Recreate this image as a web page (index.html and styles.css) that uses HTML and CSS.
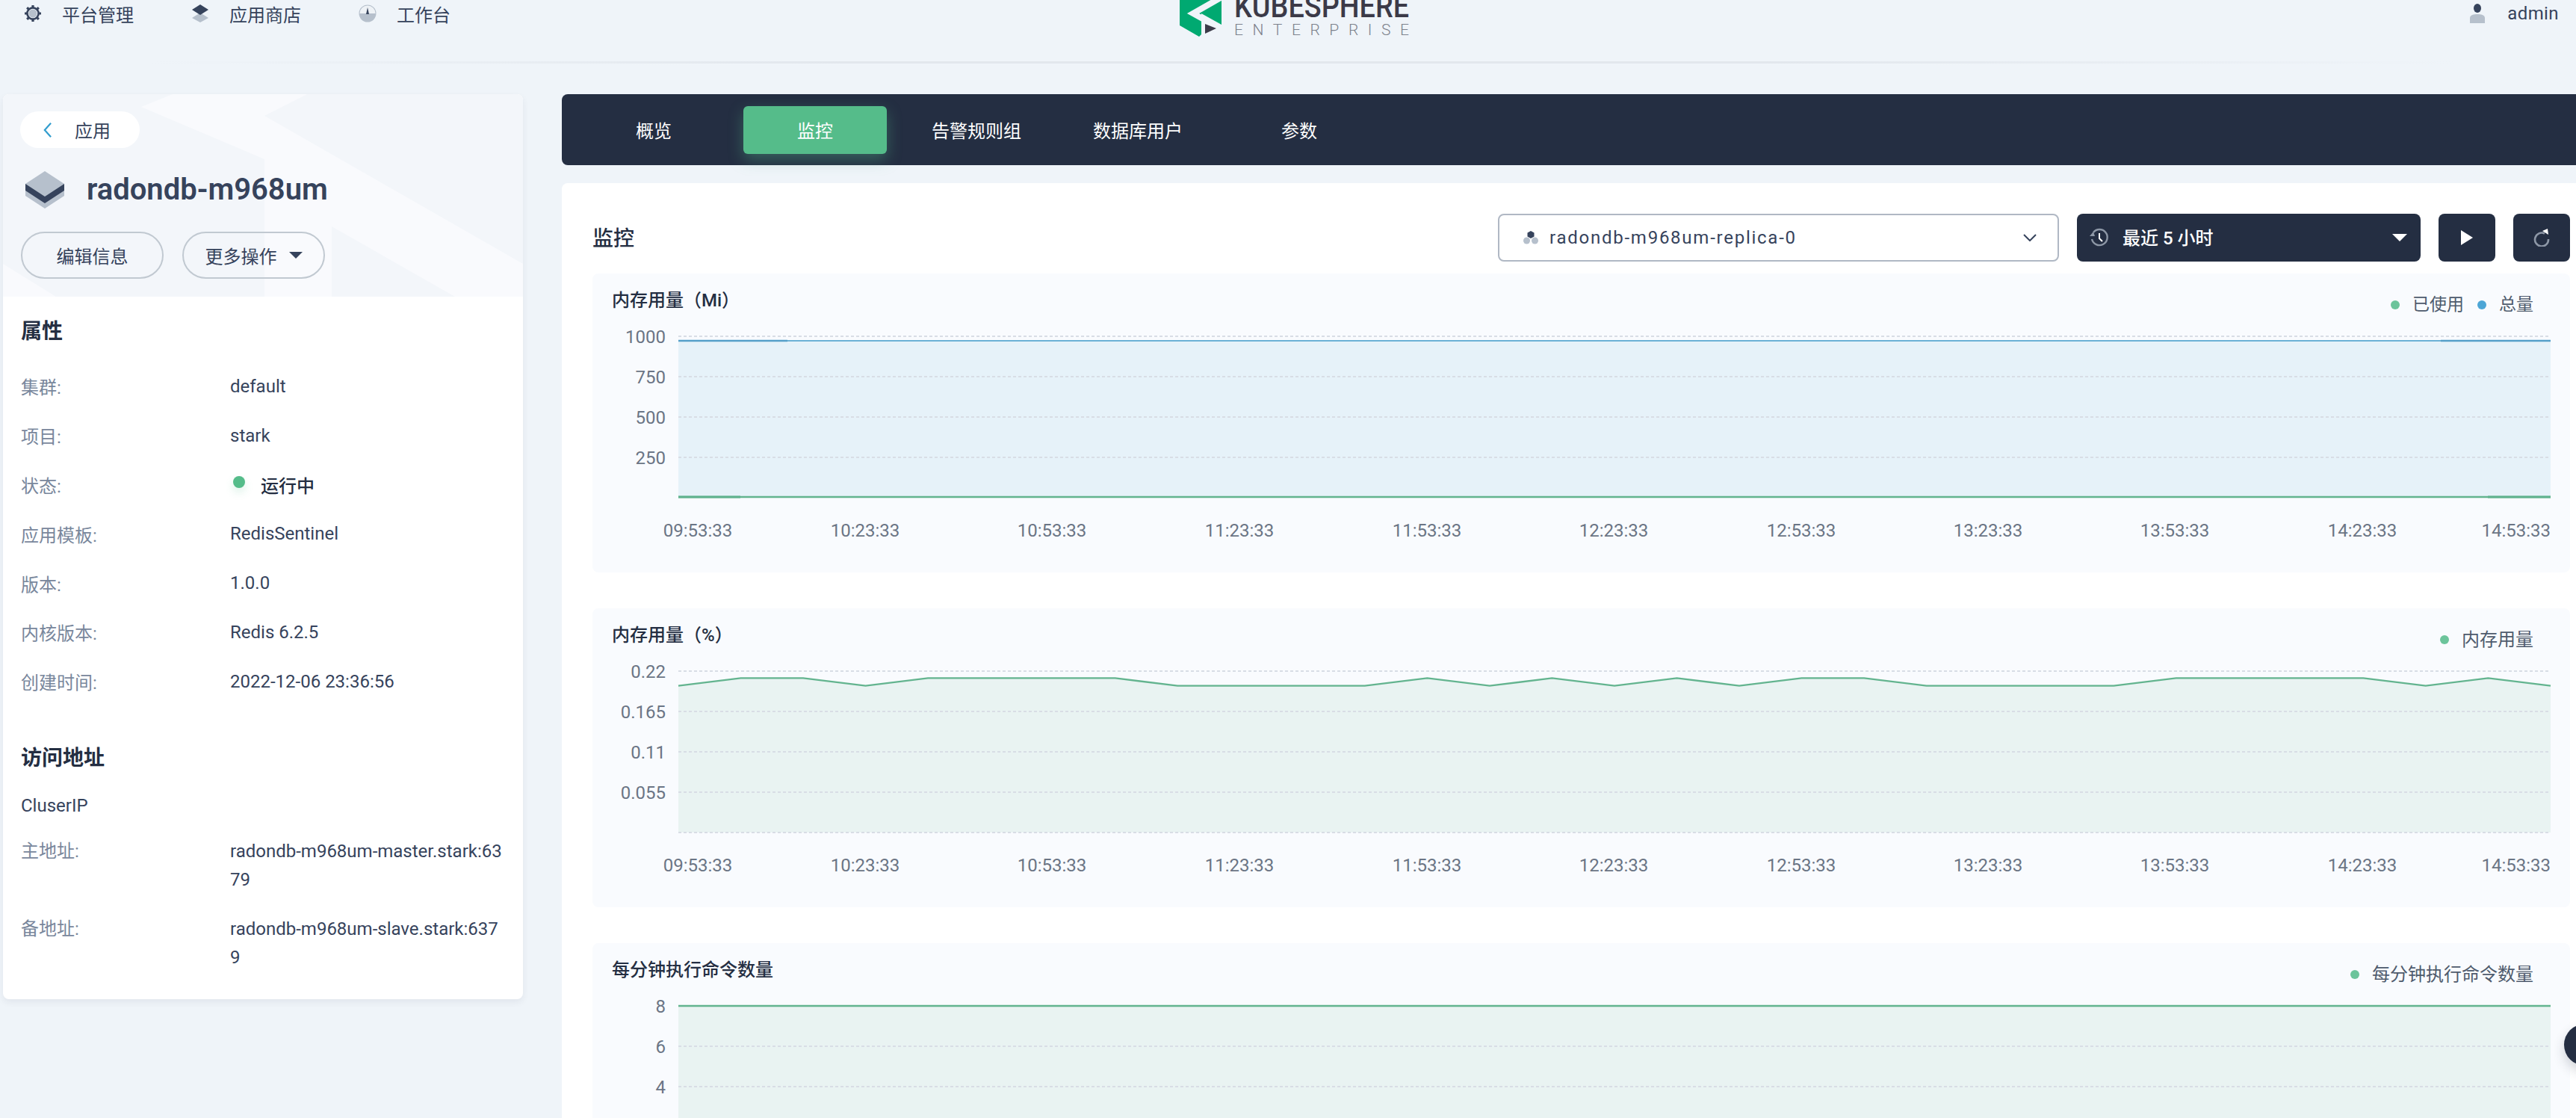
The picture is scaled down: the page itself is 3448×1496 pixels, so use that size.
FILE: index.html

```html
<!DOCTYPE html>
<html lang="zh">
<head>
  <meta charset="UTF-8" />
  <title>radondb-m968um - KubeSphere</title>
  <link rel="stylesheet" href="styles.css">
</head>
<body>

  <header class="topbar">
    <nav class="topnav">
      <a class="topnav-item">
        <svg class="nav-icon" viewBox="0 0 24 24">
          <circle cx="12" cy="12" r="5.5" fill="#b6c0cc"/>
          <circle cx="12" cy="12" r="7.6" fill="none" stroke="#36435c" stroke-width="2.6"/>
          <path d="M12 1v4M12 19v4M1 12h4M19 12h4M4.2 4.2l2.9 2.9M16.9 16.9l2.9 2.9M4.2 19.8l2.9-2.9M16.9 7.1l2.9-2.9" stroke="#36435c" stroke-width="3.2"/>
        </svg>
        平台管理
      </a>
      <a class="topnav-item">
        <svg class="nav-icon" viewBox="0 0 24 24">
          <path d="M12 11 L23 18 L12 24 L1 18 Z" fill="#b6c0cc"/>
          <path d="M12 0 L23 7 L12 14 L1 7 Z" fill="#36435c"/>
        </svg>
        应用商店
      </a>
      <a class="topnav-item">
        <svg class="nav-icon" viewBox="0 0 24 24">
          <circle cx="12" cy="12" r="11.5" fill="#b6c0cc"/>
          <path d="M1.5 12a10.5 10.5 0 0 1 21 0z" fill="#eef2f6"/>
          <path d="M12 4 L14 13 H10 Z" fill="#36435c"/>
        </svg>
        工作台
      </a>
    </nav>
    <svg class="logo" viewBox="0 0 310 50">
      <polygon points="0,-2 56,-2 56,33 29,18 29,46 26,49 0,34" fill="#00a971"/>
      <polyline points="60,-6 18,18 56,39" fill="none" stroke="#eff4f9" stroke-width="8"/>
      <polygon points="34,32 34,45 49,38" fill="#3b3a48"/>
      <text class="logo-main" x="73" y="23" textLength="234" lengthAdjust="spacingAndGlyphs">KUBESPHERE</text>
      <text class="logo-sub" x="73" y="47" textLength="234">ENTERPRISE</text>
    </svg>
    <div class="user">
      <svg class="user-icon" viewBox="0 0 22 26">
        <ellipse cx="11" cy="6" rx="5" ry="6" fill="#36435c"/>
        <path d="M1 26 V19 C1 15 6 14 11 14 C16 14 21 15 21 19 V26 Z" fill="#b6c0cc"/>
      </svg>
      admin
    </div>
  </header>
  <div class="topbar-line"></div>

  <div class="layout">
    <aside class="side">
      <div class="side-head">
        <svg class="side-pattern" viewBox="0 0 696 271">
          <polygon points="227,0 185,17 350,87 350,271 440,271 440,177 605,271 696,271 696,227 350,29 407,0"/>
          <polygon points="0,227 71,271 0,271"/>
        </svg>
        <a class="back-link">
          <svg class="back-icon" viewBox="0 0 14 24"><path d="M12 2 L3 12 L12 22" fill="none" stroke="#329dce" stroke-width="2.4"/></svg>
          应用
        </a>
        <div class="app-title">
          <svg class="app-icon" viewBox="0 0 52 50">
            <path d="M26 0 L52 17 V33 L26 50 L0 33 V17 Z" fill="#b6c0cc"/>
            <path d="M0 17 L26 34 L52 17 V26 L26 43 L0 26 Z" fill="#36435c"/>
          </svg>
          <h1>radondb-m968um</h1>
        </div>
        <div class="side-actions">
          <button class="pill-btn">编辑信息</button>
          <button class="pill-btn">更多操作<span class="caret"></span></button>
        </div>
      </div>

      <div class="side-body">
        <h2 class="section-title">属性</h2>
        <dl class="props">
          <div class="prop"><dt>集群:</dt><dd>default</dd></div>
          <div class="prop"><dt>项目:</dt><dd>stark</dd></div>
          <div class="prop"><dt>状态:</dt><dd class="status"><span class="status-dot"></span>运行中</dd></div>
          <div class="prop"><dt>应用模板:</dt><dd>RedisSentinel</dd></div>
          <div class="prop"><dt>版本:</dt><dd>1.0.0</dd></div>
          <div class="prop"><dt>内核版本:</dt><dd>Redis 6.2.5</dd></div>
          <div class="prop"><dt>创建时间:</dt><dd>2022-12-06 23:36:56</dd></div>
        </dl>
        <h2 class="section-title access-title">访问地址</h2>
        <div class="cluster-type">CluserIP</div>
        <dl class="addrs">
          <div class="addr"><dt>主地址:</dt><dd>radondb-m968um-master.stark:6379</dd></div>
          <div class="addr"><dt>备地址:</dt><dd>radondb-m968um-slave.stark:6379</dd></div>
        </dl>
      </div>
    </aside>

    <main class="main">
      <div class="tabs">
        <a class="tab">概览</a>
        <a class="tab active">监控</a>
        <a class="tab">告警规则组</a>
        <a class="tab">数据库用户</a>
        <a class="tab">参数</a>
      </div>

      <section class="monitor">
        <div class="toolbar">
          <h2 class="monitor-title">监控</h2>
          <div class="toolbar-right">
            <div class="replica-select">
              <svg class="replica-icon" viewBox="0 0 20 18">
                <circle cx="4.5" cy="13" r="4.5" fill="#b6c0cc"/>
                <circle cx="15.5" cy="13" r="4.5" fill="#b6c0cc"/>
                <polygon points="10,0 14.5,2.5 14.5,7.5 10,10 5.5,7.5 5.5,2.5" fill="#36435c"/>
              </svg>
              <span class="replica-name">radondb-m968um-replica-0</span>
              <svg class="chevron" viewBox="0 0 18 10"><path d="M1 1 L9 9 L17 1" fill="none" stroke="#36435c" stroke-width="2"/></svg>
            </div>
            <div class="time-select">
              <svg class="clock-icon" viewBox="0 0 26 26">
                <path d="M5 6 A10.5 10.5 0 1 1 3 15" fill="none" stroke="#8d97a6" stroke-width="2.4"/>
                <polygon points="0,11 7,11 5,5" fill="#8d97a6"/>
                <path d="M13 7 V14 L17 18" fill="none" stroke="#fff" stroke-width="2"/>
              </svg>
              <span class="time-label">最近 5 小时</span>
              <span class="time-caret"></span>
            </div>
            <button class="icon-btn"><span class="play"></span></button>
            <button class="icon-btn">
              <svg class="refresh-icon" viewBox="0 0 22 24">
                <path d="M15 6.5 A9 9 0 1 0 20 14" fill="none" stroke="#8d97a6" stroke-width="2.6"/>
                <polygon points="12,3 20,8 19,0" fill="#fff"/>
              </svg>
            </button>
          </div>
        </div>

        <div class="chart-card">
          <div class="chart-head">
            <h3 class="chart-title">内存用量（Mi）</h3>
            <div class="legend compact">
              <span class="legend-item"><i class="dot green"></i>已使用</span>
              <span class="legend-item"><i class="dot blue"></i>总量</span>
            </div>
          </div>
          <svg class="plot" viewBox="0 0 2647 336">
            <rect class="fill-blue" x="115" y="26" width="2506" height="210"/>
            <path class="grid" d="M115 20H2621M115 74H2621M115 128H2621M115 182H2621"/>
            <path class="line-blue" d="M115 26H2621"/>
            <path class="line-blue thick" d="M115 26H261M2474 26H2621"/>
            <path class="line-green" d="M115 235H2621"/>
            <path class="line-green thick" d="M115 235H198M2537 235H2621"/>
            <g class="ticks">
              <text x="98" y="28.5">1000</text>
              <text x="98" y="82.5">750</text>
              <text x="98" y="136.5">500</text>
              <text x="98" y="190.5">250</text>
            </g>
            <g class="times">
              <text x="141" y="288">09:53:33</text>
              <text x="365" y="288">10:23:33</text>
              <text x="615" y="288">10:53:33</text>
              <text x="866" y="288">11:23:33</text>
              <text x="1117" y="288">11:53:33</text>
              <text x="1367" y="288">12:23:33</text>
              <text x="1618" y="288">12:53:33</text>
              <text x="1868" y="288">13:23:33</text>
              <text x="2118" y="288">13:53:33</text>
              <text x="2369" y="288">14:23:33</text>
              <text class="last" x="2621" y="288">14:53:33</text>
            </g>
          </svg>
        </div>

        <div class="chart-card">
          <div class="chart-head">
            <h3 class="chart-title">内存用量（%）</h3>
            <div class="legend">
              <span class="legend-item"><i class="dot green"></i>内存用量</span>
            </div>
          </div>
          <svg class="plot" viewBox="0 0 2647 336">
            <polygon class="fill-green" points="115,39.6 198.5,29.4 282,29.4 365.6,39.6 449.1,29.4 532.7,29.4 616.2,29.4 699.7,29.4 783.2,39.6 866.8,39.6 950.3,39.6 1033.8,39.6 1117.4,29.4 1200.9,39.6 1284.4,29.4 1368,39.6 1451.5,29.4 1535,39.6 1618.5,29.4 1702.1,29.4 1785.6,39.6 1869.1,39.6 1952.7,39.6 2036.2,39.6 2119.7,29.4 2203.3,29.4 2286.8,29.4 2370.3,29.4 2453.8,39.6 2537.4,29.4 2621,39.6 2621,236 115,236"/>
            <path class="grid" d="M115 20H2621M115 74H2621M115 128H2621M115 182H2621M115 236H2621"/>
            <polyline class="line-green" points="115,39.6 198.5,29.4 282,29.4 365.6,39.6 449.1,29.4 532.7,29.4 616.2,29.4 699.7,29.4 783.2,39.6 866.8,39.6 950.3,39.6 1033.8,39.6 1117.4,29.4 1200.9,39.6 1284.4,29.4 1368,39.6 1451.5,29.4 1535,39.6 1618.5,29.4 1702.1,29.4 1785.6,39.6 1869.1,39.6 1952.7,39.6 2036.2,39.6 2119.7,29.4 2203.3,29.4 2286.8,29.4 2370.3,29.4 2453.8,39.6 2537.4,29.4 2621,39.6"/>
            <g class="ticks">
              <text x="98" y="28.5">0.22</text>
              <text x="98" y="82.5">0.165</text>
              <text x="98" y="136.5">0.11</text>
              <text x="98" y="190.5">0.055</text>
            </g>
            <g class="times">
              <text x="141" y="288">09:53:33</text>
              <text x="365" y="288">10:23:33</text>
              <text x="615" y="288">10:53:33</text>
              <text x="866" y="288">11:23:33</text>
              <text x="1117" y="288">11:53:33</text>
              <text x="1367" y="288">12:23:33</text>
              <text x="1618" y="288">12:53:33</text>
              <text x="1868" y="288">13:23:33</text>
              <text x="2118" y="288">13:53:33</text>
              <text x="2369" y="288">14:23:33</text>
              <text class="last" x="2621" y="288">14:53:33</text>
            </g>
          </svg>
        </div>

        <div class="chart-card">
          <div class="chart-head">
            <h3 class="chart-title">每分钟执行命令数量</h3>
            <div class="legend">
              <span class="legend-item"><i class="dot green"></i>每分钟执行命令数量</span>
            </div>
          </div>
          <svg class="plot" viewBox="0 0 2647 336">
            <rect class="fill-green" x="115" y="20" width="2506" height="216"/>
            <path class="grid" d="M115 74H2621M115 128H2621M115 182H2621M115 236H2621"/>
            <path class="line-green" d="M115 20H2621"/>
            <g class="ticks">
              <text x="98" y="28.5">8</text>
              <text x="98" y="82.5">6</text>
              <text x="98" y="136.5">4</text>
            </g>
          </svg>
        </div>
      </section>
    </main>
  </div>

  <div class="float-btn"></div>

</body>
</html>
```

FILE: styles.css

```css
* {
  box-sizing: border-box;
}
html, body {
  height: 100%;
}
body {
  margin: 0;
  height: 1496px;
  overflow: hidden;
  background-color: #eff4f9;
  color: #36435c;
  font-family: Roboto, "Noto Sans CJK SC", sans-serif;
  font-size: 24px;
}
h1, h2, h3, dl, dd {
  margin: 0;
}

/* top bar */
.topbar {
  display: grid;
  grid-template-columns: 1579px 310px 1fr;
  height: 82px;
  overflow: hidden;
}
.topnav {
  display: flex;
  gap: 77px;
  padding-left: 32px;
}
.topnav-item {
  display: flex;
  align-items: center;
  gap: 27px;
  height: 36px;
  color: #36435c;
}
.nav-icon {
  width: 24px;
  height: 24px;
}
.logo {
  width: 310px;
  height: 50px;
  overflow: hidden;
}
.logo-main {
  font-family: Roboto, sans-serif;
  font-size: 43px;
  font-weight: 500;
  fill: #3b3a48;
}
.logo-sub {
  font-family: Roboto, sans-serif;
  font-size: 21px;
  font-weight: 300;
  fill: #7d828c;
}
.user {
  display: flex;
  justify-content: flex-end;
  align-items: center;
  gap: 29px;
  height: 36px;
  padding-right: 23px;
  letter-spacing: 0.4px;
}
.user-icon {
  width: 22px;
  height: 26px;
}
.topbar-line {
  height: 3px;
  margin: 0 160px 0 200px;
  background: linear-gradient(90deg, rgba(222,227,234,0), #e2e7ed 30%, #e2e7ed 70%, rgba(222,227,234,0));
}

.layout {
  display: flex;
  padding-top: 41px;
  padding-left: 4px;
}

/* left panel */
.side {
  flex: none;
  width: 696px;
  height: 1211px;
  background: white;
  border-radius: 8px;
  box-shadow: 0 4px 10px rgba(36,46,66,0.07);
  overflow: hidden;
}
.side-head {
  position: relative;
  height: 271px;
  padding: 23px 0 0 24px;
  background-color: #f3f6fa;
}
.side-pattern {
  position: absolute;
  left: 0;
  top: 0;
  width: 696px;
  height: 271px;
  fill: #f9fafd;
}
.back-link {
  position: relative;
  display: inline-flex;
  align-items: center;
  gap: 30px;
  width: 160px;
  height: 49px;
  margin-left: -1px;
  padding-left: 30px;
  background: white;
  border-radius: 25px;
}
.back-icon {
  width: 13px;
  height: 22px;
}
.app-title {
  position: relative;
  display: flex;
  align-items: center;
  gap: 30px;
  height: 50px;
  margin-top: 31px;
  margin-left: 6px;
}
.app-icon {
  width: 52px;
  height: 50px;
}
.app-title h1 {
  margin-bottom: 2px;
  font-size: 40px;
  font-weight: 600;
  color: #36435c;
}
.side-actions {
  position: relative;
  display: flex;
  gap: 25px;
  margin-top: 31px;
}
.pill-btn {
  display: flex;
  justify-content: center;
  align-items: center;
  gap: 16px;
  width: 191px;
  height: 63px;
  padding: 0;
  background: transparent;
  border: 2px solid #c1c9d1;
  border-radius: 32px;
  color: #36435c;
  font-family: inherit;
  font-size: 24px;
}
.caret {
  width: 0;
  height: 0;
  border-left: 9px solid transparent;
  border-right: 9px solid transparent;
  border-top: 9px solid #36435c;
}
.side-body {
  padding: 27px 24px 0;
}
.section-title {
  font-size: 28px;
  font-weight: 600;
  line-height: 40px;
  color: #242e42;
}
.props {
  margin-top: 20px;
}
.prop {
  display: flex;
  align-items: center;
  height: 65.8px;
}
dt {
  flex: none;
  width: 280px;
  color: #79879c;
}
.status {
  display: flex;
  align-items: center;
  gap: 21px;
  padding-left: 4px;
  font-weight: 500;
  color: #242e42;
}
.status-dot {
  width: 16px;
  height: 16px;
  margin-top: -6px;
  background-color: #55bc8a;
  border-radius: 50%;
  box-shadow: 0 6px 12px rgba(85,188,138,0.2);
}
.access-title {
  margin-top: 50px;
}
.cluster-type {
  margin-top: 25px;
  line-height: 36px;
}
.addrs {
  margin-top: 24px;
}
.addr {
  display: flex;
  line-height: 38px;
  margin-bottom: 28px;
}
.addr dd {
  width: 366px;
  word-break: break-all;
}

/* right side */
.main {
  flex: 1;
  min-width: 0;
  margin-left: 52px;
}
.tabs {
  display: flex;
  gap: 24px;
  align-items: center;
  height: 95px;
  padding-left: 27px;
  background-color: #242e42;
  border-radius: 8px 0 0 8px;
}
.tab {
  width: 192px;
  height: 64px;
  padding-top: 2px;
  line-height: 64px;
  text-align: center;
  color: white;
  border-radius: 6px;
}
.tab.active {
  background-color: #55bc8a;
  box-shadow: 0 8px 20px rgba(85,188,138,0.36);
}
.monitor {
  margin-top: 24px;
  padding: 41px 8px 0 41px;
  background: white;
  border-radius: 8px 0 0 8px;
}
.toolbar {
  display: flex;
  justify-content: space-between;
  align-items: center;
  height: 64px;
  margin-bottom: 16px;
}
.monitor-title {
  margin-bottom: 3px;
  font-size: 28px;
  font-weight: 500;
  color: #242e42;
}
.toolbar-right {
  display: flex;
  gap: 24px;
}
.replica-select {
  display: flex;
  align-items: center;
  width: 751px;
  height: 64px;
  padding: 0 28px 0 32px;
  border: 2px solid #b0b8c4;
  border-radius: 8px;
  background: white;
}
.replica-icon {
  width: 20px;
  height: 18px;
}
.replica-name {
  flex: 1;
  margin-left: 15px;
  letter-spacing: 1.75px;
}
.chevron {
  width: 18px;
  height: 10px;
}
.time-select {
  display: flex;
  align-items: center;
  width: 460px;
  height: 64px;
  padding: 0 18px 0 17px;
  background-color: #242e42;
  border-radius: 8px;
  color: white;
}
.clock-icon {
  width: 26px;
  height: 26px;
}
.time-label {
  flex: 1;
  margin-left: 18px;
  margin-bottom: 3px;
  font-weight: 500;
}
.time-caret {
  border-left: 10px solid transparent;
  border-right: 10px solid transparent;
  border-top: 10px solid white;
}
.icon-btn {
  display: flex;
  justify-content: center;
  align-items: center;
  width: 76px;
  height: 64px;
  padding: 0;
  background-color: #242e42;
  border: none;
  border-radius: 8px;
}
.play {
  border-top: 10px solid transparent;
  border-bottom: 10px solid transparent;
  border-left: 16px solid white;
}
.refresh-icon {
  width: 22px;
  height: 24px;
}

/* charts */
.chart-card {
  height: 400px;
  margin-bottom: 48px;
  background-color: #f9fbfe;
  border-radius: 8px;
}
.chart-head {
  display: flex;
  justify-content: space-between;
  height: 64px;
  padding: 16px 49px 0 26px;
}
.chart-title {
  font-size: 24px;
  font-weight: 500;
  line-height: 40px;
  color: #242e42;
}
.legend {
  display: flex;
  gap: 18px;
  margin-top: 3px;
  line-height: 40px;
  color: #4f5b6d;
}
.legend.compact {
  font-size: 23px;
}
.legend-item {
  display: flex;
  align-items: center;
  gap: 17px;
}
.dot {
  width: 12px;
  height: 12px;
  border-radius: 50%;
}
.dot.green {
  background-color: #6cc49b;
}
.dot.blue {
  background-color: #4da6d6;
}
.plot {
  display: block;
  width: 2647px;
  height: 336px;
}
.fill-blue {
  fill: #e6f2f9;
}
.fill-green {
  fill: #e9f3f2;
}
.grid {
  fill: none;
  stroke: #d8dde5;
  stroke-width: 2;
  stroke-dasharray: 4 3;
}
.line-blue {
  fill: none;
  stroke: #6cb1d6;
  stroke-width: 2;
}
.line-blue.thick {
  stroke: #559fc9;
  stroke-width: 2.6;
}
.line-green {
  fill: none;
  stroke: #63b48f;
  stroke-width: 2.4;
}
.line-green.thick {
  stroke: #5fb28d;
  stroke-width: 2.8;
}
.ticks text {
  font-size: 24px;
  fill: #6b7585;
  text-anchor: end;
}
.times text {
  font-size: 24px;
  fill: #6b7585;
  text-anchor: middle;
}
.times text.last {
  text-anchor: end;
}

.float-btn {
  position: fixed;
  left: 3432px;
  top: 1370px;
  width: 56px;
  height: 56px;
  background-color: #242e42;
  border-radius: 50%;
  box-shadow: 0 8px 16px rgba(36,46,66,0.2);
}
```
